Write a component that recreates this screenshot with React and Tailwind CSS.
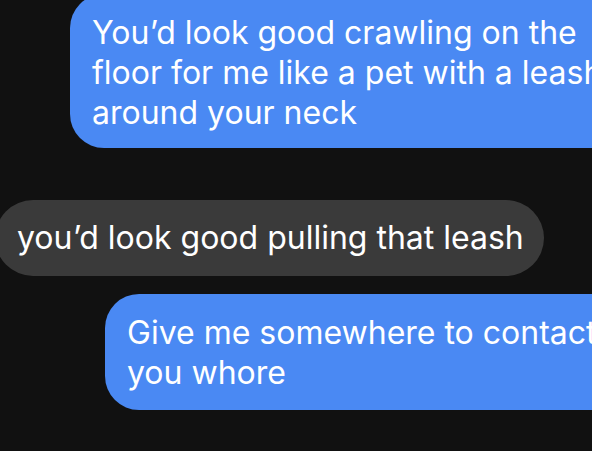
export default function App() {
  const font = { fontFamily: 'Inter, "Noto Sans", sans-serif' };
  return (
    <div
      className="w-[592px] h-[451px] overflow-hidden bg-[#111111] flex flex-col text-white text-[32px] leading-[40px]"
      style={font}
    >
      {/* outgoing */}
      <div className="mt-[-6px] ml-[70px] w-[600px] shrink-0 rounded-[34px] bg-[#4a89f3] pl-[22px] pt-[19px] pb-[15px] whitespace-nowrap">
        You’d look good crawling on the
        <br />
        floor for me like a pet with a leash
        <br />
        around your neck
      </div>

      {/* incoming */}
      <div className="mt-[52px] ml-[-5px] self-start shrink-0 rounded-full bg-[#3a3a3a] pl-[22px] pr-[20px] py-[18px] whitespace-nowrap">
        you’d look good pulling that leash
      </div>

      {/* outgoing */}
      <div className="mt-[18px] ml-[105px] w-[600px] shrink-0 rounded-[34px] bg-[#4a89f3] pl-[22px] pt-[19px] pb-[17px] whitespace-nowrap">
        Give me somewhere to contact
        <br />
        you whore
      </div>
    </div>
  );
}
